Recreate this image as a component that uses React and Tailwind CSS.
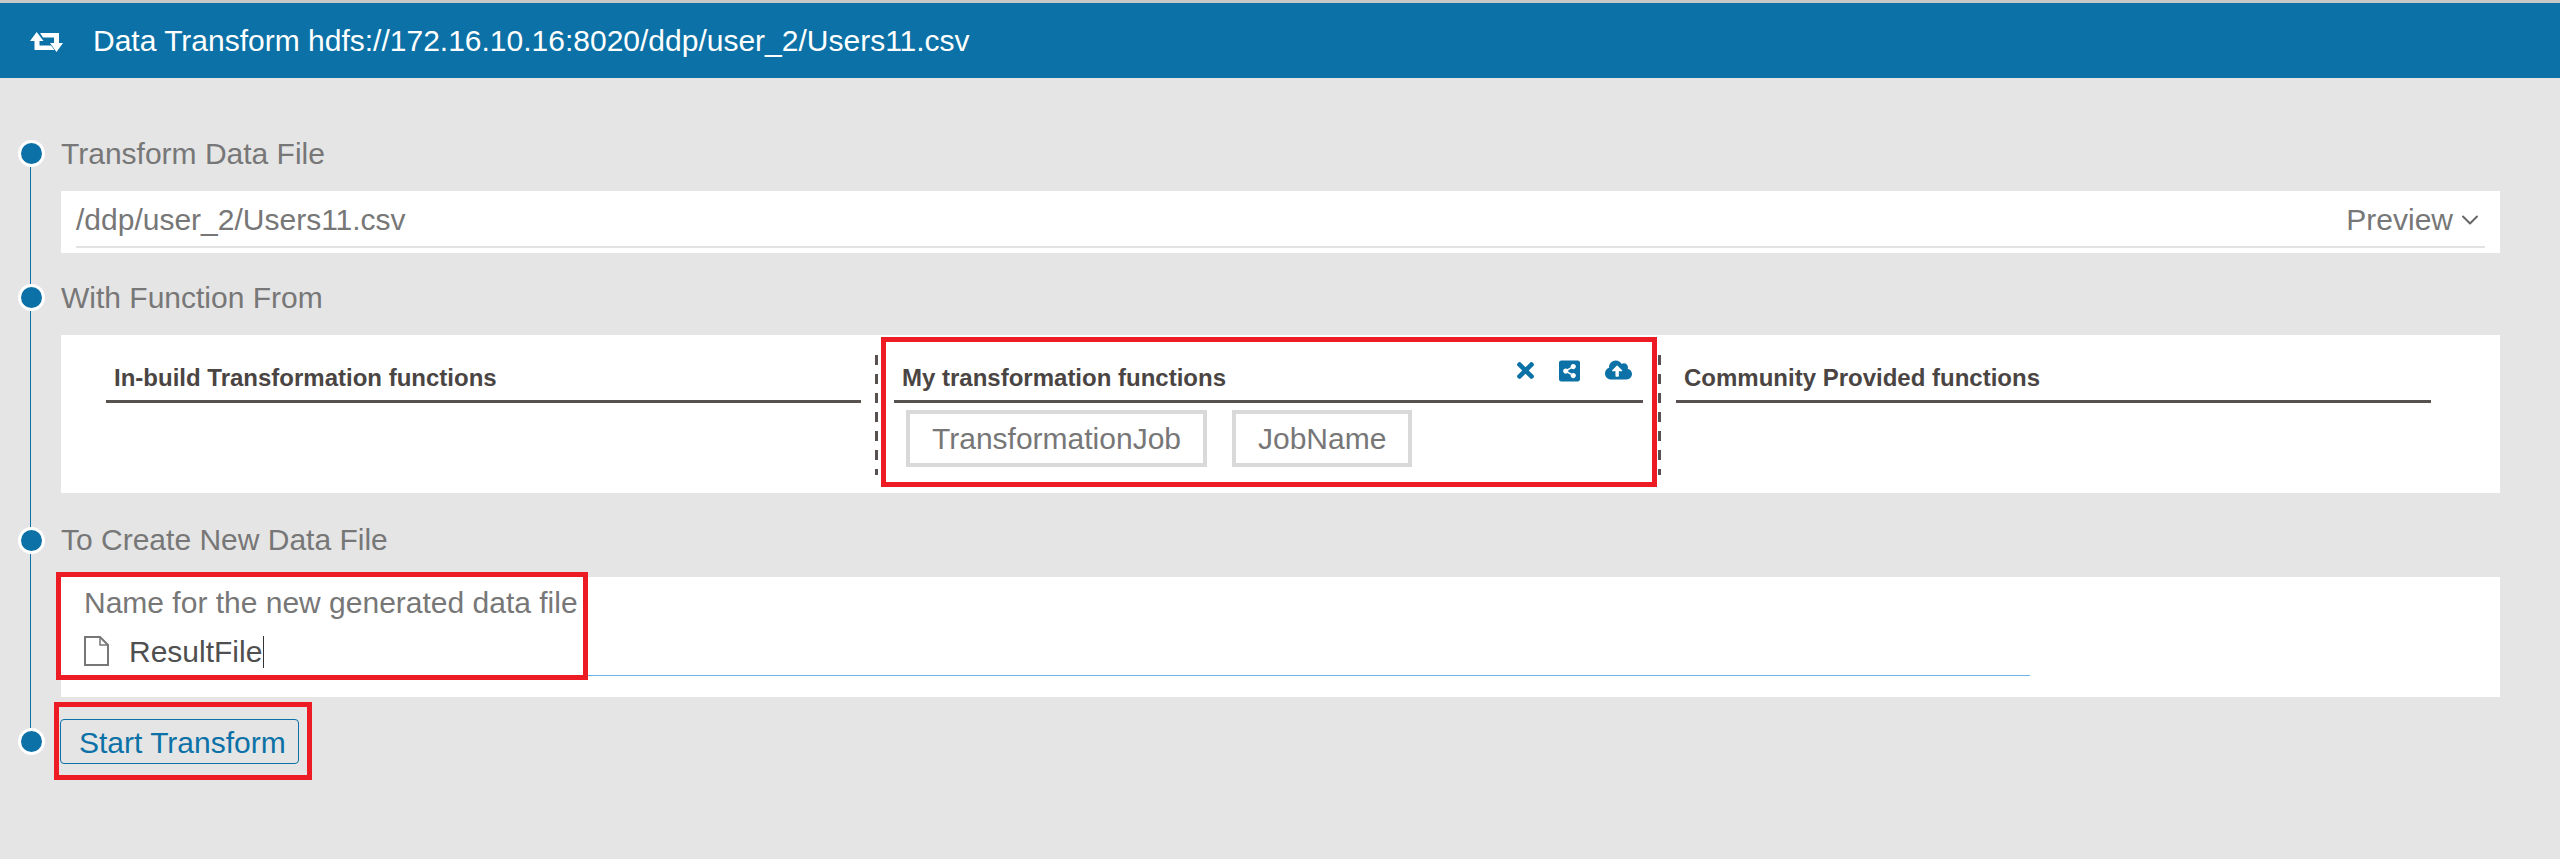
import React from 'react';
import { ChevronDown } from 'lucide-react';
import { FaTimes, FaShareAltSquare, FaCloudUploadAlt } from 'react-icons/fa';

const Rail = ({ first, last, dotTop }) => (
  <div className="w-[61px] shrink-0 flex flex-col pl-[18px]">
    <div className={`ml-[12px] w-[1px] ${first ? '' : 'bg-[#0b71a6]'} ${dotTop}`}></div>
    <div className="w-[27px] h-[27px] rounded-full bg-[#0b71a6] border-[3px] border-white shrink-0"></div>
    {!last && <div className="ml-[12px] w-[1px] flex-1 bg-[#0b71a6]"></div>}
  </div>
);

const StepLabel = ({ children, className = 'leading-[40px]' }) => (
  <div className={`h-[38px] text-[30px] text-[#777777] ${className}`}>{children}</div>
);

const ColumnTitle = ({ children, icons }) => (
  <div className="h-[68px] px-[8px] flex justify-between border-b-[3px] border-[#575250]">
    <h4 className="self-end pb-[9px] text-[24px] leading-[27px] font-bold text-[#4a4543]">{children}</h4>
    {icons}
  </div>
);

const Dashes = ({ className }) => (
  <div className={`w-[3px] h-[120px] mt-[20px] bg-[repeating-linear-gradient(to_bottom,#575250_0,#575250_10px,transparent_10px,transparent_19px)] ${className}`}></div>
);

const Tag = ({ children }) => (
  <div className="h-[57px] px-[22px] flex items-center border-4 border-[#d9d9d9] text-[30px] text-[#777777]">{children}</div>
);

const RedBox = ({ className }) => (
  <div className={`absolute border-[5px] border-[#ed1c24] pointer-events-none ${className}`}></div>
);

const RetweetIcon = () => (
  <svg viewBox="0 0 33 20" className="w-[33px] h-[20px] mt-[3px]" fill="currentColor">
    <path d="M6.7 0L13.5 9H9.5V13.5H21L24.5 18H4.5V9H0Z" />
    <path d="M10 1H29V11H33L26.5 20L20 11H24V5.5H13Z" />
  </svg>
);

const FileIcon = () => (
  <svg viewBox="0 0 25 30" className="w-[25px] h-[30px] shrink-0" fill="none" stroke="#777777" strokeWidth="2">
    <path d="M1 1H16L24 9V29H1Z" />
    <path d="M16 1V9H24" strokeWidth="1.5" />
  </svg>
);

export default function App() {
  return (
    <div className="relative min-h-screen bg-[#e5e5e5] font-['Liberation_Sans',Arial,sans-serif]">
      <div className="h-[3px] bg-[#c8c8c8]"></div>
      <header className="h-[75px] bg-[#0b71a6] flex items-center pl-[30px] text-white text-[30px]">
        <RetweetIcon />
        <span className="ml-[30px]">Data Transform hdfs://172.16.10.16:8020/ddp/user_2/Users11.csv</span>
      </header>

      <main className="pt-[56px] pr-[60px]">
        {/* Transform data file */}
        <section className="flex">
          <Rail first dotTop="h-[6px]" />
          <div className="flex-1 pb-[25px]">
            <StepLabel>Transform Data File</StepLabel>
            <div className="mt-[19px] h-[62px] bg-white pl-[15px] pr-[15px]">
              <div className="h-[57px] pt-[2px] flex items-center justify-between border-b-2 border-[#e2e2e2] text-[30px] text-[#777777]">
                <span>/ddp/user_2/Users11.csv</span>
                <span className="flex items-center">
                  Preview
                  <ChevronDown className="w-[28px] h-[28px] ml-[3px] mr-[1px] text-[#666666]" strokeWidth={1.7} />
                </span>
              </div>
            </div>
          </div>
        </section>

        {/* Function from */}
        <section className="flex">
          <Rail dotTop="h-[6px]" />
          <div className="flex-1 pb-[28px]">
            <StepLabel>With Function From</StepLabel>
            <div className="mt-[19px] h-[158px] bg-white pl-[45px] grid grid-cols-[755px_33px_749px_33px_755px]">
              <div>
                <ColumnTitle>In-build Transformation functions</ColumnTitle>
              </div>
              <Dashes className="ml-[14px]" />
              <div>
                <ColumnTitle
                  icons={
                    <div className="flex items-start gap-[25px] pt-[24px] pr-[3px] text-[#0b71a6]">
                      <FaTimes className="w-[17px] h-[25px] -mt-[1px]" />
                      <FaShareAltSquare className="w-[21px] h-[24px]" />
                      <FaCloudUploadAlt className="w-[27px] h-[22px]" />
                    </div>
                  }
                >
                  My transformation functions
                </ColumnTitle>
                <div className="mt-[7px] ml-[12px] flex gap-[25px]">
                  <Tag>TransformationJob</Tag>
                  <Tag>JobName</Tag>
                </div>
              </div>
              <Dashes className="ml-[15px]" />
              <div>
                <ColumnTitle>Community Provided functions</ColumnTitle>
              </div>
            </div>
          </div>
        </section>

        {/* New data file */}
        <section className="flex">
          <Rail dotTop="h-[6px]" />
          <div className="flex-1 pb-[22px]">
            <StepLabel className="leading-[38px]">To Create New Data File</StepLabel>
            <div className="mt-[18px] h-[120px] bg-white pl-[23px] pt-[10px]">
              <div className="h-[32px] leading-[32px] text-[30px] text-[#777777]">Name for the new generated data file</div>
              <div className="mt-[17px] w-[1946px] h-[40px] flex items-start border-b border-[#6db1e6]">
                <FileIcon />
                <span className="ml-[20px] h-[32px] leading-[32px] text-[30px] text-[#4f4f4f] border-r border-[#333333] pr-[1px]">ResultFile</span>
              </div>
            </div>
          </div>
        </section>

        {/* Start */}
        <section className="flex">
          <Rail last dotTop="h-[9px]" />
          <div className="flex-1 -ml-[1px]">
            <button className="h-[45px] w-[239px] pb-[4px] pl-[18px] border border-[#0b71a6] rounded-[4px] text-[30px] text-[#0b71a6] text-left">
              Start Transform
            </button>
          </div>
        </section>
      </main>

      {/* annotation boxes drawn over the screenshot */}
      <RedBox className="left-[881px] top-[337px] w-[776px] h-[150px]" />
      <RedBox className="left-[56px] top-[572px] w-[532px] h-[108px]" />
      <RedBox className="left-[54px] top-[702px] w-[258px] h-[78px]" />
    </div>
  );
}
